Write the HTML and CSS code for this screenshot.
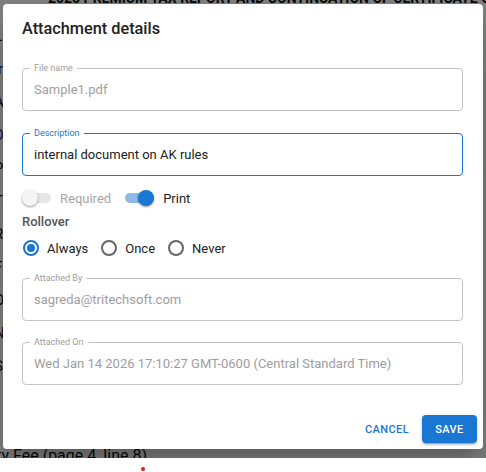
FILE: index.html
```html
<!DOCTYPE html>
<html lang="en">
<head>
  <meta charset="UTF-8">
  <meta name="viewport" content="width=device-width, initial-scale=1.0">
  <title>Attachment details</title>
  <link rel="stylesheet" href="styles.css">
</head>
<body>
  <div class="screen">
    <!-- page behind the dialog -->
    <div class="page">
      <h1 class="page-title">2025 PREMIUM TAX REPORT AND CONTINUATION OF CERTIFICATE OF AUTHORITY</h1>
      <p class="page-line">Line 1 Total premiums written in this state during the year</p>
      <p class="page-line link">Instructions for completing schedule A, see attached</p>
      <p class="page-line">Annual Renewal Fee (page 2, line 3) and supporting forms</p>
      <p class="page-line link">Download the worksheet for county tax computation</p>
      <p class="page-line">Penalty and interest for late filing of the return</p>
      <p class="page-line">Total credits allowed against premium tax liability</p>
      <p class="page-line">Retaliatory tax computed on schedule R of the report</p>
      <p class="page-line">Fire marshal tax and firefighters relief assessment</p>
      <p class="page-line">Overpayment from previous year applied to this return</p>
      <p class="page-line">Net amount due with this report after all credits</p>
      <p class="page-line">Signature of officer authorized to sign the report</p>
      <div class="page-last">
        <span>Certificate of Authority Fee (page 4, line 8)</span>
      </div>
    </div>
    <div class="backdrop"></div>

    <div class="dialog">
      <h2 class="dialog-title">Attachment details</h2>

      <div class="field disabled">
        <span class="field-label">File name</span>
        <span class="field-value">Sample1.pdf</span>
      </div>

      <div class="field focused gap-22">
        <span class="field-label">Description</span>
        <span class="field-value">internal document on AK rules</span>
      </div>

      <div class="switch-row">
        <label class="switch off">
          <span class="track"></span>
          <span class="thumb"></span>
        </label>
        <span class="switch-label muted">Required</span>
        <label class="switch on">
          <span class="track"></span>
          <span class="thumb"></span>
        </label>
        <span class="switch-label">Print</span>
      </div>

      <div class="group-label">Rollover</div>

      <div class="radio-row">
        <span class="radio checked"></span>
        <span class="radio-label">Always</span>
        <span class="radio"></span>
        <span class="radio-label">Once</span>
        <span class="radio"></span>
        <span class="radio-label">Never</span>
      </div>

      <div class="field disabled gap-attached">
        <span class="field-label">Attached By</span>
        <span class="field-value">sagreda@tritechsoft.com</span>
      </div>

      <div class="field disabled gap-21">
        <span class="field-label">Attached On</span>
        <span class="field-value">Wed Jan 14 2026 17:10:27 GMT-0600 (Central Standard Time)</span>
      </div>

      <div class="actions">
        <button class="btn-text">Cancel</button>
        <button class="btn-contained">Save</button>
      </div>
    </div>
  </div>

  <div class="below">
    <span class="dot"></span>
  </div>
</body>
</html>
```

FILE: styles.css
```css
/* Reset */
* {
  margin: 0;
  padding: 0;
  box-sizing: border-box;
}

body {
  font-family: Roboto, 'Liberation Sans', sans-serif;
  background-color: #fff;
  color: #222;
}

.screen {
  position: relative;
  height: 458px;
  overflow: hidden;
}

/* page behind */
.page {
  margin-left: -6px;
  color: #111;
  white-space: nowrap;
}

.page-title {
  font-size: 14px;
  font-weight: 700;
  line-height: 20px;
  margin-top: -12px;
  margin-left: 54px;
  margin-bottom: 12px;
}

.page-line {
  font-size: 15px;
  line-height: 33px;
}

.page-line.link {
  color: #1a1aa6;
}

.page-last {
  display: flex;
  justify-content: flex-end;
  width: 153px;
  margin-top: 56px;
  font-size: 16px;
  line-height: 33px;
}

.backdrop {
  position: absolute;
  top: 0;
  left: 0;
  right: 0;
  bottom: 0;
  background-color: rgba(0, 0, 0, 0.5);
}

/* dialog */
.dialog {
  position: absolute;
  top: 4px;
  left: 3px;
  width: 480px;
  height: 445px;
  background-color: #fff;
  border-radius: 4px;
  padding: 13px 20px 0 19px;
  box-shadow: 0 11px 15px -7px rgba(0, 0, 0, 0.2), 0 24px 38px 3px rgba(0, 0, 0, 0.14);
}

.dialog-title {
  font-size: 16.3px;
  font-weight: 500;
  line-height: 24px;
  color: #212121;
  margin-bottom: 27px;
}

/* outlined fields */
.field {
  position: relative;
  height: 43px;
  border: 1px solid #c4c4c4;
  border-radius: 4px;
  display: flex;
  align-items: center;
  padding-left: 11px;
}

.field-label {
  position: absolute;
  top: -7px;
  left: 7px;
  padding: 0 4px;
  background-color: #fff;
  font-size: 9px;
  line-height: 12px;
  color: #9e9e9e;
}

.field-value {
  font-size: 13px;
  color: #9e9e9e;
  white-space: nowrap;
}

.field.focused {
  border-color: #1976d2;
}

.field.focused .field-label {
  color: #1976d2;
}

.field.focused .field-value {
  color: #222;
}

.gap-22 {
  margin-top: 22px;
}

.gap-21 {
  margin-top: 21px;
}

.gap-attached {
  margin-top: 20px;
}

/* switches */
.switch-row {
  display: flex;
  align-items: center;
  height: 20px;
  margin-top: 12px;
}

.switch {
  position: relative;
  width: 29px;
  height: 16px;
  display: block;
}

.switch .track {
  position: absolute;
  top: 3px;
  left: 0;
  width: 29px;
  height: 10px;
  border-radius: 5px;
}

.switch .thumb {
  position: absolute;
  top: 0;
  width: 16px;
  height: 16px;
  border-radius: 50%;
  box-shadow: 0 1px 2px rgba(0, 0, 0, 0.3), 0 1px 3px rgba(0, 0, 0, 0.12);
}

.switch.off .track {
  background-color: #e6e6e6;
}

.switch.off .thumb {
  left: 0;
  background-color: #f5f5f5;
}

.switch.on .track {
  background-color: #8cb9ea;
}

.switch.on .thumb {
  left: 13px;
  background-color: #1976d2;
}

.switch-label {
  font-size: 13px;
  color: #222;
  margin-left: 9px;
  margin-right: 14px;
}

.switch-label.muted {
  color: #a6a6a6;
}

.group-label {
  margin-top: 6px;
  font-size: 13px;
  font-weight: 500;
  line-height: 16px;
  color: #555;
}

/* radios */
.radio-row {
  display: flex;
  align-items: center;
  height: 20px;
  margin-top: 8px;
}

.radio {
  position: relative;
  width: 16px;
  height: 16px;
  border: 2px solid #666;
  border-radius: 50%;
  margin-left: 1px;
}

.radio.checked {
  border-color: #1976d2;
}

.radio.checked::after {
  content: '';
  position: absolute;
  top: 2px;
  left: 2px;
  width: 8px;
  height: 8px;
  border-radius: 50%;
  background-color: #1976d2;
}

.radio-label {
  font-size: 13px;
  color: #222;
  margin-left: 8px;
  margin-right: 12px;
}

/* actions */
.actions {
  display: flex;
  justify-content: flex-end;
  align-items: center;
  margin-top: 30px;
  margin-right: -14px;
}

button {
  font-family: Roboto, 'Liberation Sans', sans-serif;
  font-weight: 500;
  font-size: 11px;
  letter-spacing: 0.4px;
  text-transform: uppercase;
  border: none;
  cursor: pointer;
}

.btn-text {
  background: none;
  color: #1976d2;
  padding: 0 8px;
  height: 28px;
  margin-right: 5px;
}

.btn-contained {
  background-color: #1976d2;
  color: #fff;
  width: 55px;
  height: 28px;
  border-radius: 4px;
  box-shadow: 0 3px 1px -2px rgba(0, 0, 0, 0.2), 0 2px 2px rgba(0, 0, 0, 0.14), 0 1px 5px rgba(0, 0, 0, 0.12);
}

/* below the viewport area */
.below {
  height: 14px;
  padding-left: 141px;
  padding-top: 9px;
}

.dot {
  display: block;
  width: 4px;
  height: 4px;
  border-radius: 50%;
  background-color: #e81818;
}
```
